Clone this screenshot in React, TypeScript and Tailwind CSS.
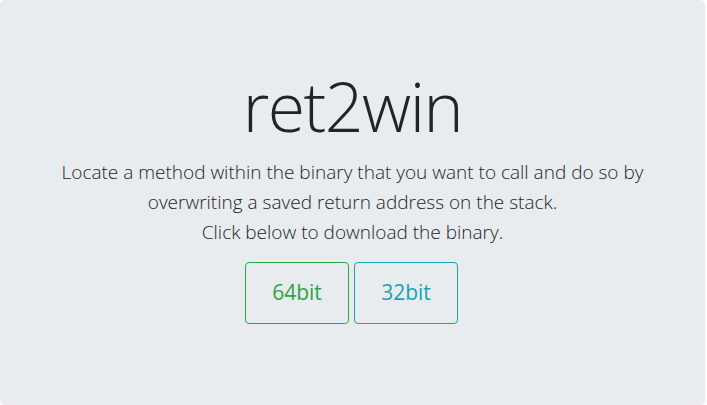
export default function App() {
  return (
    <div className="w-[707px] h-[405px] bg-white">
      <div
        className="w-[705px] h-[405px] rounded-[5px] bg-[#e9ecef] pt-[63px] text-center text-[#212529]"
        style={{ fontFamily: '"Open Sans", "Noto Sans", sans-serif' }}
      >
        <h1 className="text-[68px] font-light leading-[86px] tracking-[-1.5px] mb-2">ret2win</h1>
        <p className="text-[19px] font-light leading-[30px] mb-[15px] px-[40px]">
          Locate a method within the binary that you want to call and do so by
          overwriting a saved return address on the stack.
          <br />
          Click below to download the binary.
        </p>
        <div className="flex justify-center gap-[5px] pr-[2px]">
          <a
            href="#"
            className="w-[104px] h-[62px] flex items-center justify-center border border-[#28a745] rounded-[4px] text-[#28a745] text-[21px] font-normal"
          >
            64bit
          </a>
          <a
            href="#"
            className="w-[104px] h-[62px] flex items-center justify-center border border-[#17a2b8] rounded-[4px] text-[#17a2b8] text-[21px] font-normal"
          >
            32bit
          </a>
        </div>
      </div>
    </div>
  );
}
